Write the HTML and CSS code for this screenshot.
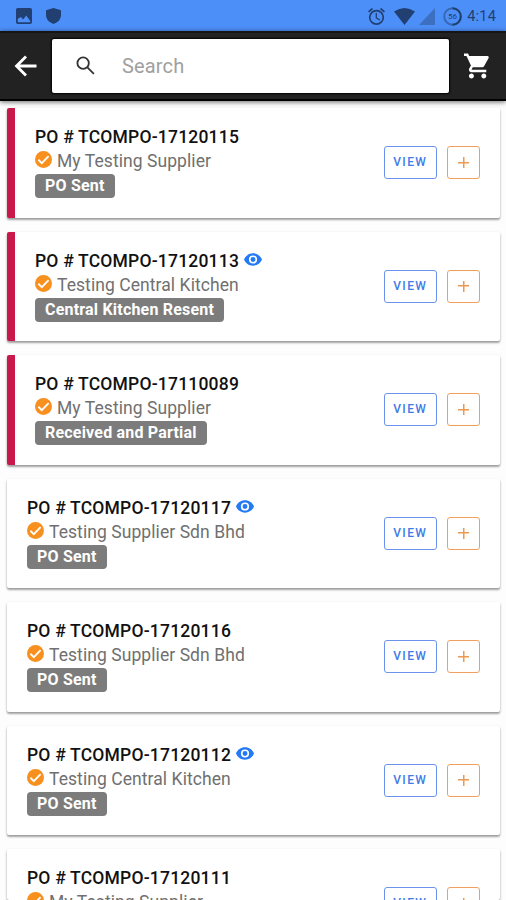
FILE: index.html
```
<!DOCTYPE html>
<html lang="en">
<head>
<meta charset="utf-8">
<title>Purchase Orders</title>
<link rel="stylesheet" href="styles.css">
</head>
<body>
<svg class="defs" aria-hidden="true">
  <symbol id="check" viewBox="2 2 20 20"><path fill="#f7901e" d="M12 2a10 10 0 1 0 0 20 10 10 0 0 0 0-20z"/><path fill="none" stroke="#fff" stroke-width="2.1" d="M6 12.3l4 4 8-8.300"/></symbol>
  <symbol id="eye" viewBox="1 4.500 22 15"><path fill="#2479f5" d="M12 4.500C7 4.500 2.730 7.610 1 12c1.730 4.390 6 7.500 11 7.500s9.270-3.110 11-7.500c-1.730-4.390-6-7.500-11-7.500zM12 17a5 5 0 1 1 0-10 5 5 0 0 1 0 10zm0-8a3 3 0 1 0 0 6 3 3 0 0 0 0-6z"/></symbol>
</svg>
<header class="status">
  <div class="group">
    <svg class="pic" viewBox="3 3 18 18"><path d="M21 19V5a2 2 0 0 0-2-2H5a2 2 0 0 0-2 2v14a2 2 0 0 0 2 2h14a2 2 0 0 0 2-2zM5 19v-4l3.500-2 2.500 3 3.500-4.500 4.500 6V19z"/></svg>
    <svg class="shield" viewBox="0 0 15 16"><path d="M7.500 0L15 2.200V7c0 4.500-3.500 7.500-7.500 9C3.500 14.500 0 11.500 0 7V2.200z"/></svg>
  </div>
  <div class="group">
    <svg class="alarm" viewBox="2 2 20 20"><path d="M22 5.720l-4.600-3.860-1.290 1.530 4.600 3.860zM7.880 3.390L6.600 1.860 2 5.710l1.290 1.530zM12.500 8H11v6l4.750 2.850.75-1.230-4-2.370zM12 4a9 9 0 1 0 0 18 9 9 0 0 0 0-18zm0 16a7 7 0 1 1 0-14 7 7 0 0 1 0 14z"/></svg>
    <svg class="wifi" viewBox="0 0 21 17"><path d="M0 3.500Q10.500-3.500 21 3.500L10.500 17z"/></svg>
    <svg class="signal" viewBox="0 0 16 17"><path d="M16 0v17H0z"/></svg>
    <svg class="battery" viewBox="0 0 19 19"><circle class="ring" cx="9.500" cy="9.500" r="8.300"/><path class="arc" d="M9.500 1.200a8.300 8.300 0 0 1 0 16.600"/><text x="9.500" y="12.400">56</text></svg>
    <span class="clock">4:14</span>
  </div>
</header>
<nav class="bar">
  <svg class="back" viewBox="0 0 24 22"><path d="M12 1.500L2.500 11l9.500 9.500M2.500 11H22.500"/></svg>
  <div class="search">
    <svg class="lens" viewBox="0 0 20 20"><circle cx="7.500" cy="7.500" r="6"/><path d="M12 12l6.800 6.800"/></svg>
    <span>Search</span>
  </div>
  <svg class="cart" viewBox="1 2 21 20"><path d="M7 18c-1.100 0-1.990.9-1.990 2S5.900 22 7 22s2-.9 2-2-.9-2-2-2zM1 2v2h2l3.600 7.590-1.350 2.450c-.16.280-.25.610-.25.960 0 1.100.9 2 2 2h12v-2H7.420c-.14 0-.25-.11-.25-.25l.03-.12.900-1.630h7.450c.75 0 1.410-.41 1.750-1.030l3.580-6.490A1 1 0 0 0 20 4H5.210l-.94-2zM17 18c-1.100 0-1.990.9-1.990 2s.890 2 1.990 2 2-.9 2-2-.9-2-2-2z"/></svg>
</nav>
<main class="list">
  <article class="card flagged">
    <div class="info">
      <h2>PO # TCOMPO-17120115</h2>
      <p><svg class="check"><use href="#check"/></svg>My Testing Supplier</p>
      <span class="badge">PO Sent</span>
    </div>
    <div class="actions"><span class="view">VIEW</span><span class="add"></span></div>
  </article>
  <article class="card flagged">
    <div class="info">
      <h2>PO # TCOMPO-17120113<svg class="eye"><use href="#eye"/></svg></h2>
      <p><svg class="check"><use href="#check"/></svg>Testing Central Kitchen</p>
      <span class="badge">Central Kitchen Resent</span>
    </div>
    <div class="actions"><span class="view">VIEW</span><span class="add"></span></div>
  </article>
  <article class="card flagged">
    <div class="info">
      <h2>PO # TCOMPO-17110089</h2>
      <p><svg class="check"><use href="#check"/></svg>My Testing Supplier</p>
      <span class="badge">Received and Partial</span>
    </div>
    <div class="actions"><span class="view">VIEW</span><span class="add"></span></div>
  </article>
  <article class="card">
    <div class="info">
      <h2>PO # TCOMPO-17120117<svg class="eye"><use href="#eye"/></svg></h2>
      <p><svg class="check"><use href="#check"/></svg>Testing Supplier Sdn Bhd</p>
      <span class="badge">PO Sent</span>
    </div>
    <div class="actions"><span class="view">VIEW</span><span class="add"></span></div>
  </article>
  <article class="card">
    <div class="info">
      <h2>PO # TCOMPO-17120116</h2>
      <p><svg class="check"><use href="#check"/></svg>Testing Supplier Sdn Bhd</p>
      <span class="badge">PO Sent</span>
    </div>
    <div class="actions"><span class="view">VIEW</span><span class="add"></span></div>
  </article>
  <article class="card">
    <div class="info">
      <h2>PO # TCOMPO-17120112<svg class="eye"><use href="#eye"/></svg></h2>
      <p><svg class="check"><use href="#check"/></svg>Testing Central Kitchen</p>
      <span class="badge">PO Sent</span>
    </div>
    <div class="actions"><span class="view">VIEW</span><span class="add"></span></div>
  </article>
  <article class="card">
    <div class="info">
      <h2>PO # TCOMPO-17120111</h2>
      <p><svg class="check"><use href="#check"/></svg>My Testing Supplier</p>
    </div>
    <div class="actions"><span class="view">VIEW</span><span class="add"></span></div>
  </article>
</main>
</body>
</html>
```
FILE: styles.css
```
* { box-sizing: border-box; }
body {
  margin: 0;
  height: 900px;
  overflow: hidden;
  display: flex;
  flex-direction: column;
  background: #fdfdfd;
  font-family: Roboto, sans-serif;
}
svg { display: block; flex: none; }
.defs { width: 0; height: 0; position: absolute; }

.status {
  flex: none;
  height: 31px;
  padding: 1px 10px 0 16px;
  display: flex;
  justify-content: space-between;
  align-items: center;
  background: #4d8ff8;
  color: #213f70;
  fill: #213f70;
}
.group { display: flex; align-items: center; }
.pic { width: 16px; height: 16px; margin-right: 14px; }
.shield { width: 15px; height: 16px; }
.alarm { width: 17px; height: 17px; margin-right: 9px; }
.wifi { width: 21px; height: 17px; margin-right: 4px; }
.signal { width: 16px; height: 17px; margin-right: 8px; fill: #3c6fc0; }
.battery { width: 19px; height: 19px; margin-right: 5px; }
.battery circle, .battery path { fill: none; stroke-width: 2; }
.ring { stroke: #3767b2; }
.arc { stroke: #213f70; }
.battery text { font-size: 8px; text-anchor: middle; }
.clock { font-size: 14.5px; font-weight: 400; line-height: 16px; padding-top: 1px; letter-spacing: .2px; }

.bar {
  flex: none;
  height: 70px;
  padding: 0 15px 1px 14px;
  display: flex;
  align-items: center;
  background: #222;
  border-top: 2px solid #151515;
  border-bottom: 2px solid #000;
  box-shadow: 0 1px 5px rgba(0, 0, 0, .6);
  position: relative;
}
.back { width: 24px; height: 22px; margin: 0 14px 0 0; fill: none; stroke: #fff; stroke-width: 2.8; }
.search {
  width: 397px;
  height: 54px;
  margin-right: 15px;
  padding-left: 24px;
  display: flex;
  align-items: center;
  background: #fff;
  border-radius: 2px;
  box-shadow: 0 0 2px 1px #000;
  font-size: 20px;
  line-height: 24px;
  letter-spacing: .15px;
  color: #a0a0a0;
}
.lens { width: 19px; height: 19px; margin-right: 27px; fill: none; stroke: #333; stroke-width: 1.9; }
.cart { width: 26px; height: 26px; fill: #fff; }

.list {
  padding: 7px 6px 0 7px;
  display: flex;
  flex-direction: column;
  gap: 14px;
}
.card {
  flex: none;
  height: 109.5px;
  padding: 17px 20px 0 20px;
  display: flex;
  justify-content: space-between;
  align-items: flex-start;
  background: #fff;
  border-radius: 2px;
  box-shadow: 0 2px 2px rgba(0, 0, 0, .3), 0 1px 3px rgba(0, 0, 0, .15);
}
.card:last-child { height: 51px; overflow: hidden; }
.flagged { border-left: 8px solid #c8194a; }
.info { display: flex; flex-direction: column; align-items: flex-start; }
h2, p { margin: 0; display: flex; align-items: center; height: 24px; white-space: nowrap; }
h2 { font-size: 17.5px; font-weight: 500; letter-spacing: .2px; color: #111; }
p { font-size: 17.5px; font-weight: 400; letter-spacing: .07px; color: #707070; }
.check { width: 17px; height: 17px; margin: -3px 5px 0 0; }
.eye { width: 18px; height: 13px; margin: -2px 0 0 5px; }
.badge {
  height: 24px;
  margin-top: 1px;
  padding: 0 10px;
  border-radius: 4px;
  background: #7c7c7c;
  color: #fff;
  font-size: 16px;
  font-weight: 700;
  letter-spacing: .2px;
  line-height: 24px;
  white-space: nowrap;
}
.actions { display: flex; gap: 10px; padding-top: 21px; }
.view, .add {
  height: 33px;
  border: 1.500px solid #6b93ee;
  border-radius: 3px;
  display: flex;
  align-items: center;
  justify-content: center;
}
.view { width: 53.5px; color: #3f7be6; font-size: 12px; font-weight: 500; letter-spacing: 1.4px; padding: 0 0 1px 0; }
.add {
  width: 33px;
  border-color: #f0a05c;
  background:
    linear-gradient(#ee9950, #ee9950) center / 11px 1.500px no-repeat,
    linear-gradient(#ee9950, #ee9950) center / 1.500px 11px no-repeat;
}
```
